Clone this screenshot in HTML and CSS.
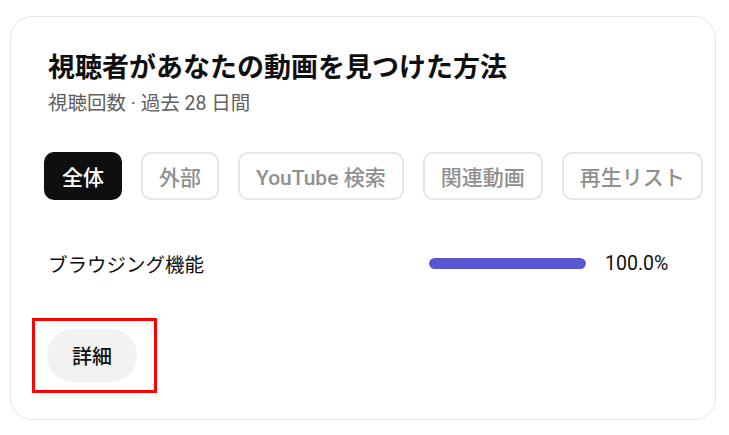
FILE: index.html
```html
<!DOCTYPE html>
<html lang="ja">
<head>
  <meta charset="UTF-8">
  <title>視聴者があなたの動画を見つけた方法</title>
  <link rel="stylesheet" href="styles.css">
</head>
<body>
  <section class="card">
    <h2 class="card-title">視聴者があなたの動画を見つけた方法</h2>
    <p class="card-sub">視聴回数 · 過去 28 日間</p>

    <div class="chips">
      <button class="chip active">全体</button>
      <button class="chip">外部</button>
      <button class="chip">YouTube 検索</button>
      <button class="chip">関連動画</button>
      <button class="chip">再生リスト</button>
    </div>

    <div class="source-row">
      <span class="source-name">ブラウジング機能</span>
      <div class="bar"><div class="bar-fill" style="width: 100%"></div></div>
      <span class="source-value">100.0%</span>
    </div>

    <div class="more-wrap">
      <button class="more-btn">詳細</button>
    </div>
  </section>
</body>
</html>
```

FILE: styles.css
```css
* {
  box-sizing: border-box;
  margin: 0;
  padding: 0;
  font-family: Roboto, "Noto Sans CJK JP", sans-serif;
}

body {
  background: #fff;
  color: #0f0f0f;
  padding: 16px 13px 16px 10px;
}

.card {
  height: 404px;
  border: 1px solid #e5e5e5;
  border-radius: 22px;
  padding: 32px 12px 0 37px;
}

.card-title {
  font-size: 27px;
  font-weight: 700;
  line-height: 38px;
}

.card-sub {
  font-size: 19.5px;
  color: #606060;
  line-height: 24px;
  margin-top: 5px;
}

.chips {
  display: flex;
  gap: 19px;
  margin-top: 36px;
  margin-left: -4px;
}

.chip {
  height: 48px;
  padding: 0 16px;
  border: 2px solid #e5e5e5;
  border-radius: 10px;
  background: #fff;
  color: #909090;
  font-size: 21px;
  font-weight: 500;
}

.chip.active {
  background: #0f0f0f;
  border-color: #0f0f0f;
  color: #fff;
}

.source-row {
  display: flex;
  align-items: center;
  margin-top: 49px;
  font-size: 19.5px;
}

.source-name {
  width: 381px;
}

.bar {
  width: 157px;
  height: 11px;
  border-radius: 6px;
  background: #eee;
  overflow: hidden;
}

.bar-fill {
  height: 100%;
  background: #5b55d2;
  border-radius: 6px;
}

.source-value {
  margin-left: 19px;
}

.more-wrap {
  display: inline-block;
  margin-top: 40px;
  margin-left: -16px;
  padding: 8px 17px 8px 12px;
  border: 3px solid #ff0000;
}

.more-btn {
  display: block;
  width: 90px;
  height: 53px;
  border: none;
  border-radius: 27px;
  background: #f2f2f2;
  color: #0f0f0f;
  font-size: 20px;
  font-weight: 500;
}
```
